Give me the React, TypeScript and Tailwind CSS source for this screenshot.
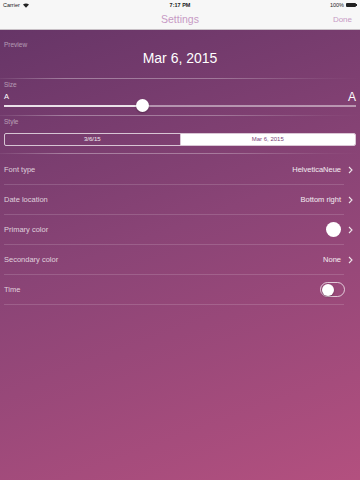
import React from "react";

const font = { fontFamily: '"Liberation Sans", Arial, sans-serif' };

function Chevron() {
  return (
    <svg width="5" height="8" viewBox="0 0 5 8" className="ml-[7px]">
      <path d="M1 1 L4 4 L1 7" fill="none" stroke="rgba(255,255,255,0.85)" strokeWidth="1.1" />
    </svg>
  );
}

function FadeLine() {
  return (
    <div className="h-px w-full bg-[linear-gradient(90deg,rgba(255,255,255,0.05)_0%,rgba(255,255,255,0.35)_18%,rgba(255,255,255,0.3)_60%,rgba(255,255,255,0.05)_90%,rgba(255,255,255,0)_100%)]" />
  );
}

function Row({ label, children }: { label: string; children?: React.ReactNode }) {
  return (
    <div className="flex flex-col">
      <div className="flex h-[29px] items-center justify-between pl-[4px] pr-[7px]">
        <span className="text-[7.5px] text-white/75">{label}</span>
        <div className="flex items-center">{children}</div>
      </div>
      <div className="ml-[4px] mr-[16px] h-px bg-white/15" />
    </div>
  );
}

export default function App() {
  return (
    <div className="flex h-[480px] w-[360px] flex-col overflow-hidden" style={font}>
      {/* Status + nav bar */}
      <div className="flex h-[30px] flex-col bg-[#f7f7f7] border-b border-[#c8c0c6]">
        <div className="flex h-[10px] items-center justify-between px-[3px] text-[5.5px] text-[#222]">
          <div className="flex w-[80px] items-center gap-[3px]">
            <span>Carrier</span>
            <svg width="6" height="5" viewBox="0 0 12 9">
              <path d="M6 9 L0 2.5 Q6 -2 12 2.5 Z" fill="#222" />
            </svg>
          </div>
          <span className="font-bold">7:17 PM</span>
          <div className="flex w-[80px] items-center justify-end gap-[2px]">
            <span>100%</span>
            <div className="flex items-center">
              <div className="h-[4px] w-[10px] rounded-[1px] bg-[#222]" />
              <div className="h-[2px] w-[1px] bg-[#222]" />
            </div>
          </div>
        </div>
        <div className="relative flex h-[19px] items-center justify-center">
          <span className="text-[10.5px] text-[#c79ac5]">Settings</span>
          <span className="absolute right-[8px] text-[8px] text-[#c79ac5]">Done</span>
        </div>
      </div>

      {/* Content */}
      <div className="flex flex-1 flex-col bg-[linear-gradient(160deg,#663567_0%,#8a4476_45%,#b3507f_100%)]">
        <div className="h-[10px]" />
        <div className="flex h-[9px] items-center px-[4px] text-[6.5px] text-white/50">Preview</div>
        <div className="flex h-[18px] items-center justify-center text-[14px] text-white">Mar 6, 2015</div>
        <div className="h-[11px]" />
        <FadeLine />
        <div className="h-[2px]" />
        <div className="flex h-[8px] items-center px-[4px] text-[6.5px] text-white/50">Size</div>
        <div className="h-px" />
        <div className="flex h-[14px] items-center justify-between px-[4px] text-white">
          <span className="text-[7.5px] leading-none">A</span>
          <span className="text-[12px] leading-none">A</span>
        </div>
        <div className="relative mx-[4px] flex h-[4px] items-center">
          <div className="h-[1.5px] w-[138px] bg-white/85" />
          <div className="h-[1.5px] flex-1 bg-white/45" />
          <div className="absolute left-[132px] top-[-5px] h-[13px] w-[13px] rounded-full bg-white shadow-[0_1px_2px_rgba(0,0,0,0.3)]" />
        </div>
        <div className="h-[7px]" />
        <FadeLine />
        <div className="h-[2px]" />
        <div className="flex h-[8px] items-center px-[4px] text-[6.5px] text-white/50">Style</div>
        <div className="h-[7px]" />
        <div className="mx-[4px] flex h-[13px] overflow-hidden rounded-[2px] border border-white/70 text-[6px]">
          <div className="flex flex-1 items-center justify-center border-r border-white/70 text-white/90">3/6/15</div>
          <div className="flex flex-1 items-center justify-center bg-white text-[#7a3f78]">Mar 6, 2015</div>
        </div>
        <div className="h-[7px]" />
        <FadeLine />
        <div className="h-px" />

        <Row label="Font type">
          <span className="text-[7.5px] text-white/90">HelveticaNeue</span>
          <Chevron />
        </Row>
        <Row label="Date location">
          <span className="text-[7.5px] text-white/90">Bottom right</span>
          <Chevron />
        </Row>
        <Row label="Primary color">
          <div className="h-[15px] w-[15px] rounded-full bg-white" />
          <Chevron />
        </Row>
        <Row label="Secondary color">
          <span className="text-[7.5px] text-white/90">None</span>
          <Chevron />
        </Row>
        <Row label="Time">
          <div className="mr-[8px] flex h-[15px] w-[25px] items-center rounded-full border border-white/70 px-[0.5px]">
            <div className="h-[12px] w-[12px] rounded-full bg-white shadow-[0_1px_2px_rgba(0,0,0,0.3)]" />
          </div>
        </Row>
      </div>
    </div>
  );
}
